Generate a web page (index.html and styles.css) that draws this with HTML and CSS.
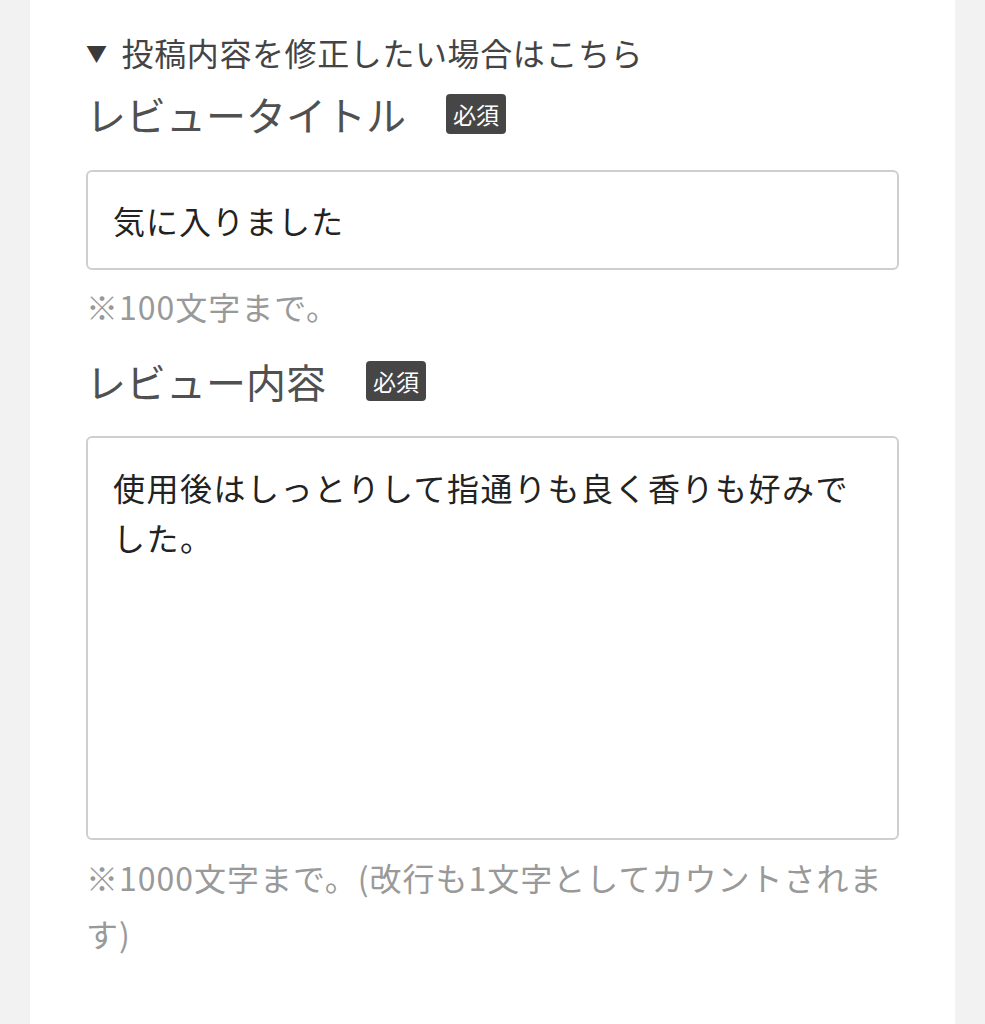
FILE: index.html
```html
<!DOCTYPE html>
<html lang="ja">
<head>
<meta charset="utf-8">
<title>レビュー投稿</title>
<link rel="stylesheet" href="styles.css">
</head>
<body>
<main class="panel">
  <p class="toggle"><span class="arrow">▼</span>投稿内容を修正したい場合はこちら</p>

  <div class="field-label first">
    <span class="label-text">レビュータイトル</span>
    <span class="badge">必須</span>
  </div>
  <input class="text-input" type="text" value="気に入りました">
  <p class="note">※100文字まで。</p>

  <div class="field-label second">
    <span class="label-text">レビュー内容</span>
    <span class="badge">必須</span>
  </div>
  <textarea class="text-area">使用後はしっとりして指通りも良く香りも好みでした。</textarea>
  <p class="note note-long">※1000文字まで。(改行も1文字としてカウントされます)</p>
</main>
</body>
</html>
```

FILE: styles.css
```css
html, body {
  margin: 0;
  padding: 0;
  background: #f2f2f2;
  font-family: "Noto Sans CJK JP", "Noto Sans", sans-serif;
}

.panel {
  margin: 0 30px;
  min-height: 1024px;
  background: #ffffff;
  padding: 28px 56px 0;
  box-sizing: border-box;
}

.toggle {
  margin: 0;
  font-size: 32px;
  line-height: 48px;
  letter-spacing: 0.6px;
  color: #444444;
  display: flex;
  align-items: center;
}

.arrow {
  font-size: 21px;
  margin-right: 14px;
  color: #3a3a3a;
}

.field-label {
  display: flex;
  align-items: center;
  height: 48px;
}

.field-label.first {
  margin-top: 14px;
}

.field-label.second {
  margin-top: 27px;
}

.label-text {
  font-size: 40px;
  line-height: 48px;
  color: #505050;
}

.badge {
  margin-left: 40px;
  background: #464646;
  color: #ffffff;
  font-size: 23px;
  line-height: 40px;
  height: 40px;
  padding: 0 7px;
  border-radius: 4px;
}

.text-input,
.text-area {
  display: block;
  width: 100%;
  box-sizing: border-box;
  border: 2px solid #cfcfcf;
  border-radius: 6px;
  background: #ffffff;
  font-family: inherit;
  font-size: 32px;
  color: #222222;
  padding: 0 25px;
  margin: 0;
  outline: none;
}

.text-input {
  margin-top: 32px;
  height: 100px;
  letter-spacing: 1px;
}

.text-area {
  margin-top: 31px;
  height: 404px;
  padding-top: 24px;
  line-height: 50px;
  letter-spacing: 1.5px;
  resize: none;
  overflow: hidden;
}

.note {
  margin: 12px 0 0;
  font-size: 32px;
  line-height: 48px;
  letter-spacing: 1px;
  color: #999999;
}

.note-long {
  margin-top: 9px;
  line-height: 56px;
}
```
